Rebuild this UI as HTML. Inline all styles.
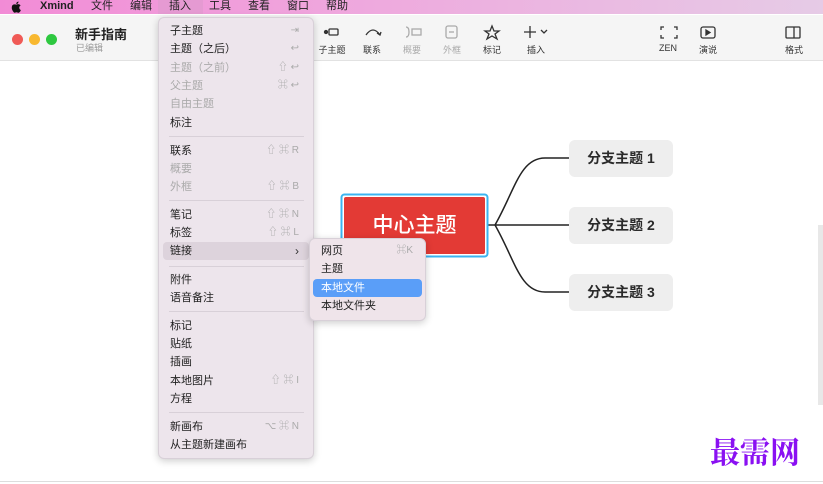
<!DOCTYPE html>
<html><head><meta charset="utf-8"><style>
*{margin:0;padding:0;box-sizing:border-box}
body{width:823px;height:484px;overflow:hidden;background:#fff;font-family:"Liberation Sans","Noto Sans CJK SC",sans-serif;position:relative;color:#222}
.mb{position:absolute;left:0;top:0;width:823px;height:14px;background:linear-gradient(90deg,#f28bd6 0%,#efa6dd 40%,#e6cbe6 100%);font-size:11px;line-height:13px}
.mb span{position:absolute;top:0}
.tb{position:absolute;left:0;top:15px;width:823px;height:46px;background:#f5f5f5;border-bottom:1px solid #e2e2e2}
.ab{position:absolute;font-size:9px;color:#333;text-align:center;width:40px}
.ab.d{color:#aaa}
.menu{position:absolute;left:158px;top:17px;width:156px;height:442px;background:#ede5ec;border-radius:6px;box-shadow:0 2px 8px rgba(0,0,0,.2);border:1px solid #d8d0d8}
.it{position:absolute;left:11px;font-size:11px;line-height:14px;color:#222}
.it.d{color:#aaa}
.sc{position:absolute;right:14px;font-size:10px;line-height:14px;color:#aaa}
.sep{position:absolute;left:10px;width:135px;height:1px;background:#d8d0d8}
.sub{position:absolute;left:309px;top:238px;width:117px;height:83px;background:#efe4ea;border-radius:6px;box-shadow:0 2px 8px rgba(0,0,0,.2);border:1px solid #d8d0d8}
.br{position:absolute;left:569px;width:104px;height:37px;background:#eeeeee;border-radius:6px;font-size:14px;font-weight:bold;line-height:37px;text-align:center;color:#2a2a2a}
</style></head><body>
<div class="mb">
<svg style="position:absolute;left:11px;top:1px" width="11" height="12" viewBox="0 0 11 12"><path d="M7.5 0.5 Q7.6 2 6 3 Q5 3.2 5.3 2 Q6 0.7 7.5 0.5Z M5.5 3.6 Q7 2.8 8.3 3.4 Q9.2 3.8 9.6 4.5 Q8 5.5 8.3 7.2 Q8.6 8.6 9.9 9 Q9.3 10.8 8.2 11.5 Q7.4 12 6.5 11.5 Q5.5 11.1 4.5 11.5 Q3.5 12 2.7 11.2 Q0.5 8.7 0.8 6 Q1.1 3.6 3.2 3.4 Q4.3 3.3 5.5 3.6Z" fill="#111"/></svg>
<span style="left:40px;font-weight:bold">Xmind</span>
<span style="left:91px">文件</span><span style="left:130px">编辑</span>
<span style="left:158px;width:45px;height:14px;background:#e59ad2"></span>
<span style="left:169px">插入</span><span style="left:209px">工具</span><span style="left:248px">查看</span><span style="left:287px">窗口</span><span style="left:326px">帮助</span>
</div>
<div class="tb">
<div style="position:absolute;left:12px;top:19px;width:11px;height:11px;border-radius:50%;background:#f05a56"></div>
<div style="position:absolute;left:29px;top:19px;width:11px;height:11px;border-radius:50%;background:#f8b830"></div>
<div style="position:absolute;left:46px;top:19px;width:11px;height:11px;border-radius:50%;background:#2ec840"></div>
<div style="position:absolute;left:75px;top:9px;font-size:13px;font-weight:bold;color:#222">新手指南</div>
<div style="position:absolute;left:76px;top:26px;font-size:9px;color:#999">已编辑</div>
<svg style="position:absolute;left:320px;top:8px" width="500" height="18" fill="none" stroke="#333" stroke-width="1.3">
<circle cx="6" cy="9" r="1.5" fill="#333"/><rect x="9" y="6" width="9" height="6" rx="1"/>
<path d="M46 12 Q53 2 60 12"/><path d="M57 10 L60 12 L61 9"/>
<g stroke="#aaa"><path d="M86 4 Q89 4 89 9 Q89 14 86 14"/><rect x="92" y="6" width="9" height="6"/><rect x="126" y="3" width="11" height="12" rx="2"/><path d="M129 9h5"/></g>
<path d="M172 3 L174 8 L179 8 L175 11 L177 16 L172 13 L167 16 L169 11 L165 8 L170 8Z"/>
<path d="M210 3v12M204 9h12M221 7l3 3 3-3"/>
<path d="M344 4h-3v3M354 4h3v3M344 15h-3v-3M354 15h3v-3"/>
<rect x="381" y="4" width="14" height="11" rx="2"/><path d="M386 7l4 2.5-4 2.5z" fill="#333"/>
<rect x="466" y="4" width="14" height="11" rx="1"/><path d="M474 4v11"/>
</svg>
<div class="ab" style="left:312px;top:28px">子主题</div>
<div class="ab" style="left:352px;top:28px">联系</div>
<div class="ab d" style="left:392px;top:28px">概要</div>
<div class="ab d" style="left:432px;top:28px">外框</div>
<div class="ab" style="left:472px;top:28px">标记</div>
<div class="ab" style="left:516px;top:28px">插入</div>
<div class="ab" style="left:648px;top:28px">ZEN</div>
<div class="ab" style="left:688px;top:28px">演说</div>
<div class="ab" style="left:774px;top:28px">格式</div>
</div>
<svg style="position:absolute;left:0;top:0" width="823" height="484" fill="none">
<path d="M487 225H495 M495 225 C515 190 520 158 545 158 H569 M495 225 H569 M495 225 C515 260 520 292 545 292 H569" stroke="#222" stroke-width="1.5"/>
<rect x="341.5" y="194.5" width="146" height="62" rx="3" stroke="#3bb4f0" stroke-width="2"/>
<rect x="344" y="197" width="141" height="57" rx="2" fill="#e33a35"/>
<line x1="0" y1="481.5" x2="823" y2="481.5" stroke="#ddd"/>
<rect x="818" y="225" width="5" height="180" fill="#e8e8e8"/>
</svg>
<div style="position:absolute;left:344px;top:197px;width:141px;height:57px;color:#fff;font-size:21px;font-weight:500;line-height:57px;text-align:center">中心主题</div>
<div class="br" style="top:140px">分支主题 1</div>
<div class="br" style="top:207px">分支主题 2</div>
<div class="br" style="top:274px">分支主题 3</div>
<div style="position:absolute;left:710px;top:432px;font-family:'Noto Serif CJK SC',serif;font-weight:bold;font-size:30px;color:#8a10f2;line-height:36px">最需网</div>
<div class="menu">
<div class="it" style="top:6px">子主题</div><div class="sc" style="top:6px">⇥</div>
<div class="it" style="top:24px">主题（之后）</div><div class="sc" style="top:24px">↩</div>
<div class="it d" style="top:43px">主题（之前）</div><div class="sc" style="top:43px">⇧ ↩</div>
<div class="it d" style="top:61px">父主题</div><div class="sc" style="top:61px">⌘ ↩</div>
<div class="it d" style="top:79px">自由主题</div>
<div class="it" style="top:98px">标注</div>
<div class="sep" style="top:118px"></div>
<div class="it" style="top:126px">联系</div><div class="sc" style="top:126px">⇧ ⌘ R</div>
<div class="it d" style="top:144px">概要</div>
<div class="it d" style="top:162px">外框</div><div class="sc" style="top:162px">⇧ ⌘ B</div>
<div class="sep" style="top:182px"></div>
<div class="it" style="top:190px">笔记</div><div class="sc" style="top:190px">⇧ ⌘ N</div>
<div class="it" style="top:208px">标签</div><div class="sc" style="top:208px">⇧ ⌘ L</div>
<div style="position:absolute;left:4px;top:224px;width:146px;height:18px;background:#ddd3dc;border-radius:4px"></div>
<div class="it" style="top:226px">链接</div><div class="sc" style="top:226px;color:#333;font-size:12px">›</div>
<div class="sep" style="top:248px"></div>
<div class="it" style="top:255px">附件</div>
<div class="it" style="top:273px">语音备注</div>
<div class="sep" style="top:293px"></div>
<div class="it" style="top:301px">标记</div>
<div class="it" style="top:319px">贴纸</div>
<div class="it" style="top:337px">插画</div>
<div class="it" style="top:356px">本地图片</div><div class="sc" style="top:356px">⇧ ⌘ I</div>
<div class="it" style="top:374px">方程</div>
<div class="sep" style="top:394px"></div>
<div class="it" style="top:402px">新画布</div><div class="sc" style="top:402px">⌥ ⌘ N</div>
<div class="it" style="top:420px">从主题新建画布</div>
</div>
<div class="sub">
<div class="it" style="top:5px">网页</div><div class="sc" style="top:5px;right:12px">⌘K</div>
<div class="it" style="top:23px">主题</div>
<div style="position:absolute;left:3px;top:40px;width:109px;height:18px;background:#5a9ef8;border-radius:4px"></div>
<div class="it" style="top:42px;color:#fff">本地文件</div>
<div class="it" style="top:60px">本地文件夹</div>
</div>
</body></html>
